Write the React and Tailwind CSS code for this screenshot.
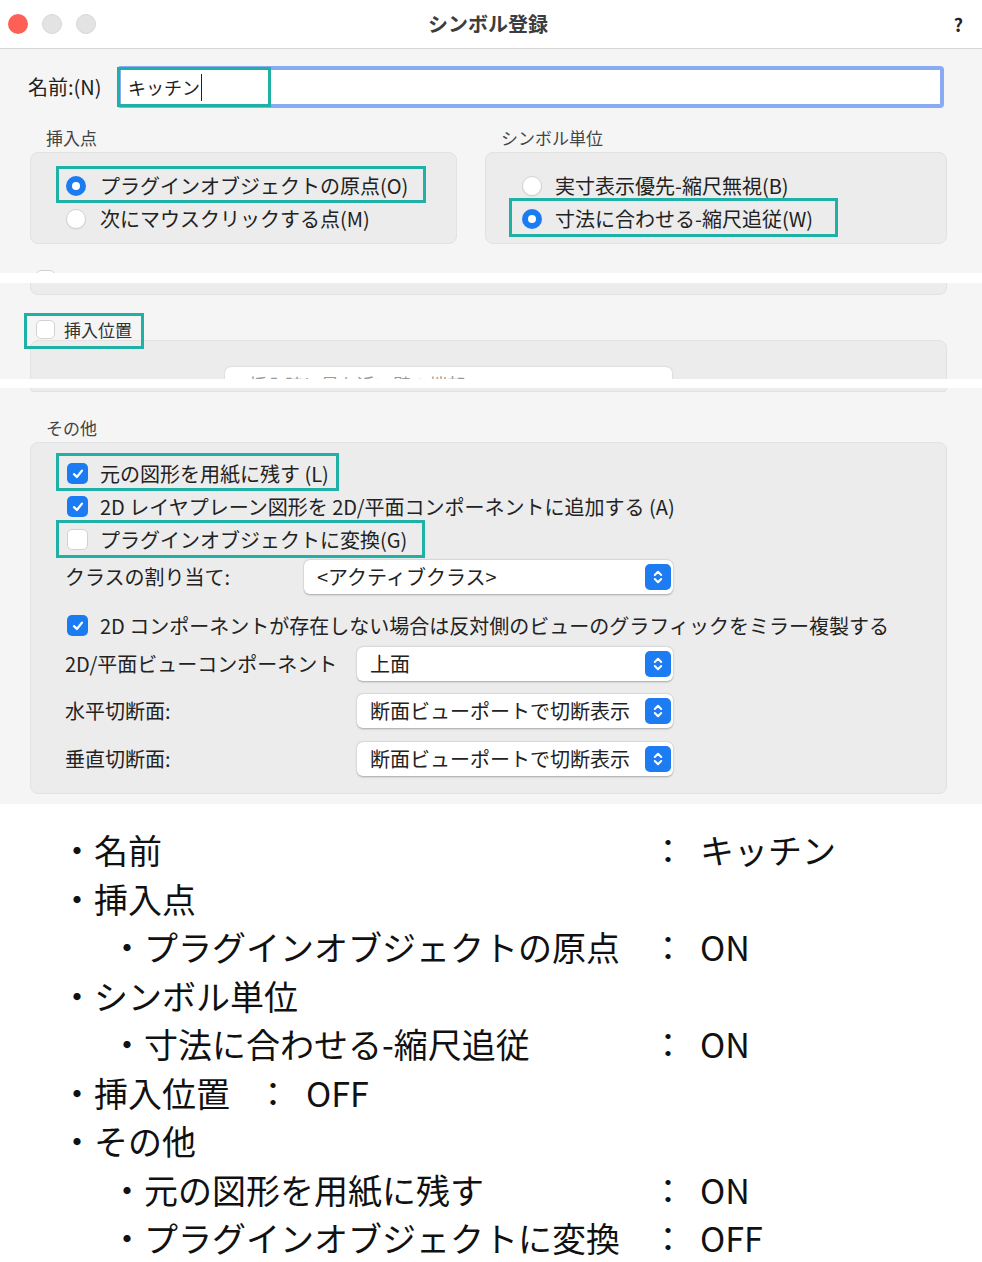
import React from 'react';

const Radio = ({ on }) =>
  on ? (
    <span className="flex h-[20px] w-[20px] shrink-0 items-center justify-center rounded-full bg-[#1b7bf3]">
      <span className="h-[8px] w-[8px] rounded-full bg-white" />
    </span>
  ) : (
    <span className="h-[20px] w-[20px] shrink-0 rounded-full border border-[#d2d2d2] bg-white shadow-[0_1px_1px_rgba(0,0,0,0.06)]" />
  );

const Check = ({ on, size = 'h-[21px] w-[21px]' }) =>
  on ? (
    <span className={`flex shrink-0 items-center justify-center rounded-[5px] bg-[#1b7bf3] ${size}`}>
      <svg width="14" height="14" viewBox="0 0 14 14">
        <path d="M3 7.2 L5.9 10 L11 3.6" stroke="white" strokeWidth="2.3" fill="none" strokeLinecap="round" strokeLinejoin="round" />
      </svg>
    </span>
  ) : (
    <span className={`shrink-0 rounded-[5px] border border-[#d2d2d2] bg-white ${size}`} />
  );

const Stepper = () => (
  <span className="flex h-[26px] w-[26px] items-center justify-center rounded-[5px] bg-[#1d7cf2]">
    <svg width="12" height="18" viewBox="0 0 12 18">
      <path d="M2.8 7 L6 3.8 L9.2 7 M2.8 11 L6 14.2 L9.2 11" stroke="white" strokeWidth="2" fill="none" strokeLinecap="round" strokeLinejoin="round" />
    </svg>
  </span>
);

const Select = ({ text, width }) => (
  <div className={`flex h-[34px] items-center justify-between rounded-[6px] bg-white pl-[13px] pr-[2px] shadow-[0_0.5px_2px_rgba(0,0,0,0.3)] ${width}`}>
    <span className="text-[20px] text-[#222]">{text}</span>
    <Stepper />
  </div>
);

// 注記用の枠
const Mark = ({ className }) => (
  <span className={`pointer-events-none absolute z-10 border-[3px] border-[#1fb0a6] ${className}`} />
);

const summary = [
  { lv: 1, label: '名前', value: 'キッチン' },
  { lv: 1, label: '挿入点' },
  { lv: 2, label: 'プラグインオブジェクトの原点', value: 'ON' },
  { lv: 1, label: 'シンボル単位' },
  { lv: 2, label: '寸法に合わせる-縮尺追従', value: 'ON' },
  { lv: 1, label: '挿入位置', inline: 'OFF' },
  { lv: 1, label: 'その他' },
  { lv: 2, label: '元の図形を用紙に残す', value: 'ON' },
  { lv: 2, label: 'プラグインオブジェクトに変換', value: 'OFF' },
];

export default function App() {
  return (
    <div className="w-[982px] bg-white font-['Noto_Sans_CJK_JP','Noto_Sans',sans-serif] leading-[24px] text-[#222]">
      {/* タイトルバー */}
      <div className="grid h-[49px] grid-cols-[1fr_auto_1fr] items-center border-b border-[#d6d6d6] bg-white">
        <div className="flex gap-[14px] pl-[8px]">
          <span className="h-[20px] w-[20px] rounded-full bg-[#fe5f57]" />
          <span className="h-[20px] w-[20px] rounded-full border border-[#d8d8d8] bg-[#e3e3e3]" />
          <span className="h-[20px] w-[20px] rounded-full border border-[#d8d8d8] bg-[#e3e3e3]" />
        </div>
        <span className="pr-[6px] text-[20px] font-semibold text-[#3d3d3d]">シンボル登録</span>
        <span className="justify-self-end pr-[19px] text-[18px] font-bold text-[#222]">?</span>
      </div>

      {/* 名前・挿入点・シンボル単位 */}
      <div className="h-[224px] overflow-hidden bg-[#f5f5f5]">
        <div className="flex items-center pt-[17px]">
          <span className="ml-[28px] w-[89px] text-[20px]">名前:(N)</span>
          <div className="relative h-[42px] w-[827px] rounded-[4px] bg-[#88abf4] p-[4px]">
            <div className="flex h-full items-center bg-white pl-[7px] text-[18px]">
              キッチン
              <span className="ml-[1px] h-[27px] w-[1px] bg-[#222]" />
            </div>
            <Mark className="left-0 top-[1px] h-[40px] w-[154px]" />
          </div>
        </div>

        <div className="mt-[18px] flex gap-[28px] px-[30px]">
          <div className="w-[427px]">
            <div className="pl-[16px] text-[17px] text-[#444]">挿入点</div>
            <div className="mt-[2px] h-[92px] rounded-[8px] border border-[#e2e2e2] bg-[#ececec] pl-[35px] pt-[16px]">
              <div className="relative flex h-[33px] items-center gap-[14px] text-[20px]">
                <Radio on />
                <span>プラグインオブジェクトの原点(O)</span>
                <Mark className="-left-[10px] -top-[3px] h-[37px] w-[370px]" />
              </div>
              <div className="flex h-[33px] items-center gap-[14px] text-[20px]">
                <Radio />
                <span>次にマウスクリックする点(M)</span>
              </div>
            </div>
          </div>
          <div className="w-[462px]">
            <div className="pl-[16px] text-[17px] text-[#444]">シンボル単位</div>
            <div className="mt-[2px] h-[92px] rounded-[8px] border border-[#e2e2e2] bg-[#ececec] pl-[36px] pt-[16px]">
              <div className="flex h-[33px] items-center gap-[13px] text-[20px]">
                <Radio />
                <span>実寸表示優先-縮尺無視(B)</span>
              </div>
              <div className="relative flex h-[33px] items-center gap-[13px] text-[20px]">
                <Radio on />
                <span>寸法に合わせる-縮尺追従(W)</span>
                <Mark className="-left-[13px] -top-[4px] h-[39px] w-[329px]" />
              </div>
            </div>
          </div>
        </div>

        <div className="ml-[36px] mt-[26px] flex items-start gap-[10px]">
          <Check size="h-[19px] w-[19px]" />
          <span className="text-[17px] text-[#888]">シンボルを中心に移動</span>
        </div>
      </div>

      <div className="h-[10px] bg-white" />

      {/* 挿入位置 */}
      <div className="h-[96px] overflow-hidden bg-[#f5f5f5] pl-[30px] pr-[35px]">
        <div className="h-[12px] rounded-b-[8px] border border-t-0 border-[#e2e2e2] bg-[#ececec]" />
        <div className="relative z-10 ml-[6px] mt-[25px] flex h-[19px] items-center gap-[9px]">
          <Check size="h-[19px] w-[19px]" />
          <span className="text-[17px] text-[#333]">挿入位置</span>
          <Mark className="-left-[12px] -top-[7px] h-[36px] w-[120px]" />
        </div>
        <div className="mt-[1px] h-[80px] rounded-[8px] border border-[#e2e2e2] bg-[#ececec] pl-[32px] pt-[26px]">
          <div className="flex items-center">
            <span className="w-[162px] pt-[10px] text-[17px] text-[#9a9a9a]">挿入位置</span>
            <div className="flex h-[34px] w-[447px] items-center justify-between rounded-[6px] bg-white px-[14px] shadow-[0_0.5px_2px_rgba(0,0,0,0.2)]">
              <span className="text-[18px] text-[#9a9a9a]">&lt;挿入時に最も近い壁の端部&gt;</span>
              <span className="text-[16px] text-[#9a9a9a]">⌃</span>
            </div>
          </div>
        </div>
      </div>

      <div className="h-[9px] bg-white" />

      {/* その他 */}
      <div className="h-[416px] bg-[#f5f5f5] pl-[30px] pr-[35px]">
        <div className="h-[4px] rounded-b-[8px] border border-t-0 border-[#e2e2e2] bg-[#ececec]" />
        <div className="mt-[24px] pl-[16px] text-[17px] text-[#444]">その他</div>
        <div className="mt-[2px] h-[352px] rounded-[8px] border border-[#e2e2e2] bg-[#ececec] pl-[34px] pt-[14px] text-[20px]">
          <div className="relative ml-[2px] flex h-[33px] items-center gap-[12px]">
            <Check on />
            <span>元の図形を用紙に残す (L)</span>
            <Mark className="-left-[11px] -top-[4px] h-[38px] w-[283px]" />
          </div>
          <div className="ml-[2px] flex h-[33px] items-center gap-[12px]">
            <Check on />
            <span>2D レイヤプレーン図形を 2D/平面コンポーネントに追加する (A)</span>
          </div>
          <div className="relative ml-[2px] flex h-[33px] items-center gap-[12px]">
            <Check />
            <span>プラグインオブジェクトに変換(G)</span>
            <Mark className="-left-[11px] -top-[3px] h-[38px] w-[369px]" />
          </div>
          <div className="mt-[4px] flex items-center">
            <span className="w-[239px]">クラスの割り当て:</span>
            <Select text="<アクティブクラス>" width="w-[369px]" />
          </div>
          <div className="ml-[2px] mt-[15px] flex h-[33px] items-center gap-[12px]">
            <Check on />
            <span>2D コンポーネントが存在しない場合は反対側のビューのグラフィックをミラー複製する</span>
          </div>
          <div className="mt-[5px] flex items-center">
            <span className="w-[292px]">2D/平面ビューコンポーネント</span>
            <Select text="上面" width="w-[316px]" />
          </div>
          <div className="mt-[13px] flex items-center">
            <span className="w-[292px]">水平切断面:</span>
            <Select text="断面ビューポートで切断表示" width="w-[316px]" />
          </div>
          <div className="mt-[14px] flex items-center">
            <span className="w-[292px]">垂直切断面:</span>
            <Select text="断面ビューポートで切断表示" width="w-[316px]" />
          </div>
        </div>
      </div>

      {/* 設定内容のまとめ */}
      <div className="pb-[10px] pt-[22px] text-[34px] text-[#111]">
        {summary.map((row, i) => (
          <div key={i} className={`flex h-[48.5px] items-center ${row.lv === 1 ? 'pl-[60px]' : 'pl-[110px]'}`}>
            {row.inline ? (
              <>
                <span>・{row.label}</span>
                <span className="ml-[26px]">：</span>
                <span className="ml-[16px]">{row.inline}</span>
              </>
            ) : (
              <>
                <span className={row.value ? (row.lv === 1 ? 'w-[591px]' : 'w-[541px]') : ''}>・{row.label}</span>
                {row.value && (
                  <>
                    <span>：</span>
                    <span className="ml-[15px]">{row.value}</span>
                  </>
                )}
              </>
            )}
          </div>
        ))}
      </div>
    </div>
  );
}
